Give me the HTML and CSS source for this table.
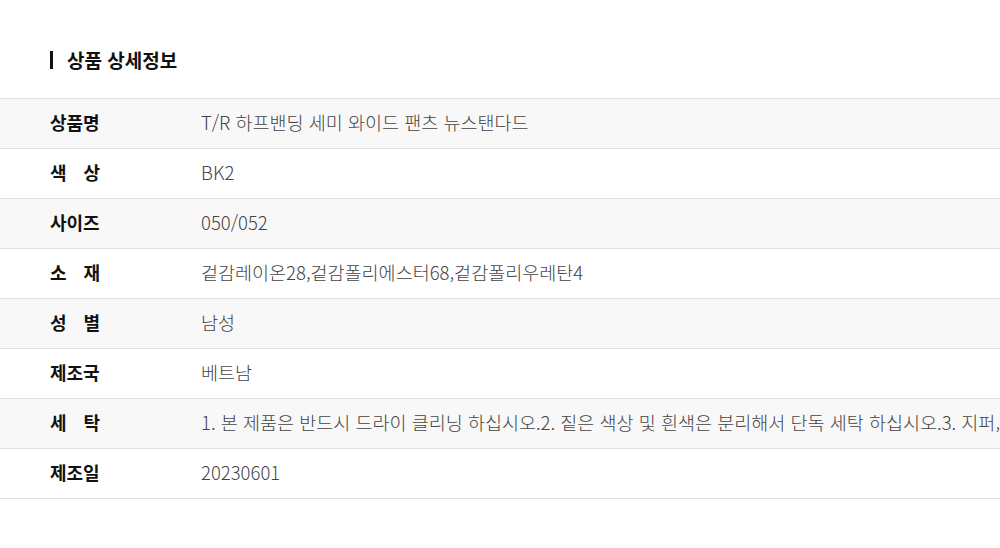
FILE: index.html
```html
<!DOCTYPE html>
<html lang="ko">
<head>
  <meta charset="UTF-8" />
  <title>상품 상세정보</title>
  <link rel="stylesheet" href="styles.css">
</head>
<body>
  <div class="detail">
    <h2 class="detail-title">상품 상세정보</h2>
    <div class="info-table">
      <div class="row"><div class="label">상품명</div><div class="value">T/R 하프밴딩 세미 와이드 팬츠 뉴스탠다드</div></div>
      <div class="row"><div class="label spaced">색상</div><div class="value">BK2</div></div>
      <div class="row"><div class="label">사이즈</div><div class="value">050/052</div></div>
      <div class="row"><div class="label spaced">소재</div><div class="value">겉감레이온28,겉감폴리에스터68,겉감폴리우레탄4</div></div>
      <div class="row"><div class="label spaced">성별</div><div class="value">남성</div></div>
      <div class="row"><div class="label">제조국</div><div class="value">베트남</div></div>
      <div class="row"><div class="label spaced">세탁</div><div class="value">1. 본 제품은 반드시 드라이 클리닝 하십시오.2. 짙은 색상 및 흰색은 분리해서 단독 세탁 하십시오.3. 지퍼,단추 등 부자재는 잠근 후 세탁 하십시오.</div></div>
      <div class="row"><div class="label">제조일</div><div class="value">20230601</div></div>
    </div>
  </div>
</body>
</html>
```

FILE: styles.css
```css
html, body {
  margin: 0;
  padding: 0;
  overflow: hidden;
  background: #fff;
  font-family: "Noto Sans CJK KR", "Noto Sans", sans-serif;
}

.detail {
  padding-top: 51px;
  overflow: hidden;
}

.detail-title {
  margin: 0 0 29px 50px;
  padding-left: 14px;
  border-left: 3px solid #111;
  font-size: 19px;
  font-weight: bold;
  line-height: 18px;
  height: 18px;
  color: #111;
}

.info-table {
  border-top: 1px solid #e0e0e0;
}

.row {
  display: flex;
  align-items: center;
  box-sizing: border-box;
  height: 50px;
  padding-bottom: 3px;
  border-bottom: 1px solid #e0e0e0;
}

.row:nth-child(odd) {
  background: #f8f8f8;
}

.label {
  flex-shrink: 0;
  width: 51px;
  margin-left: 50px;
  margin-right: 100px;
  font-size: 18px;
  font-weight: bold;
  color: #111;
  white-space: nowrap;
}

.label.spaced {
  letter-spacing: 17px;
}

.value {
  font-size: 18.5px;
  font-weight: 300;
  color: #444;
  white-space: nowrap;
}
```
